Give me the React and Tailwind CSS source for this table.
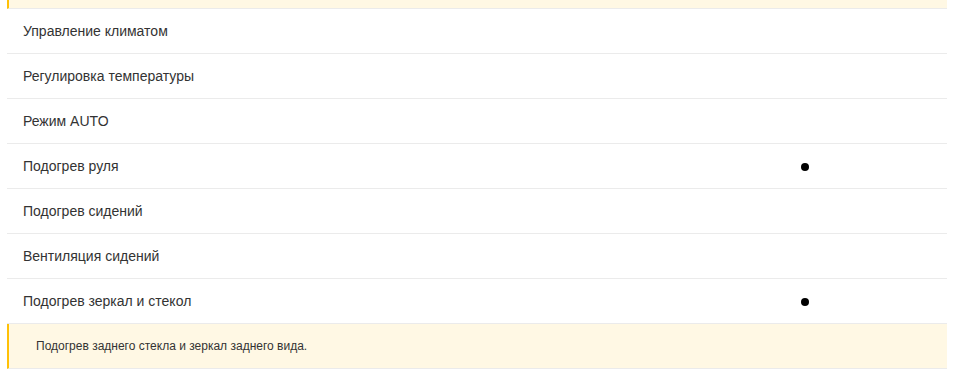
const rows = [
  { label: 'Управление климатом', has: false },
  { label: 'Регулировка температуры', has: false },
  { label: 'Режим AUTO', has: false },
  { label: 'Подогрев руля', has: true },
  { label: 'Подогрев сидений', has: false },
  { label: 'Вентиляция сидений', has: false },
  { label: 'Подогрев зеркал и стекол', has: true },
]

function FeatureRow({ label, has }) {
  return (
    <div className="flex items-center h-[45px] border-b border-[#ebebeb]">
      <div className="flex-1 pl-4 text-[14px] text-[#333]">{label}</div>
      <div className="w-[284px] flex justify-center pt-px">
        {has && <span className="block w-[8px] h-[8px] rounded-full bg-black" />}
      </div>
    </div>
  )
}

export default function App() {
  return (
    <div className="bg-white w-[959px] h-[383px] font-['Liberation_Sans',Arial,sans-serif]">
      <div className="ml-[7px] w-[940px]">
        <div className="h-[9px] bg-[#fff8e4] border-l-2 border-[#ffc107] border-b border-b-[#ebebeb]" />
        {rows.map((r) => (
          <FeatureRow key={r.label} {...r} />
        ))}
        <div className="flex items-center h-[45px] bg-[#fff8e4] border-l-2 border-[#ffc107] border-b border-b-[#ebebeb] pl-[27px] text-[12px] text-[#333]">
          Подогрев заднего стекла и зеркал заднего вида.
        </div>
      </div>
    </div>
  )
}
